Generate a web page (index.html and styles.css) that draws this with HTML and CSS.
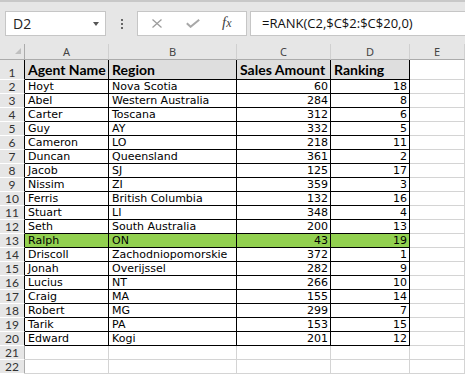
FILE: index.html
```html
<!DOCTYPE html>
<html lang="en">
<head>
  <meta charset="UTF-8" />
  <title>Sales Ranking</title>
  <link rel="stylesheet" href="styles.css">
</head>
<body>
  <div class="toolbar">
    <div class="namebox">
      <span>D2</span>
      <span class="arrow"></span>
    </div>
    <div class="dots"><i></i><i></i><i></i></div>
    <div class="fbuttons">
      <svg class="cancel" width="10" height="9" viewBox="0 0 10 9">
        <path d="M0.5 0.5 L9.5 8.5 M9.5 0.5 L0.5 8.5" stroke="#9c9c9c" stroke-width="1.3" fill="none" />
      </svg>
      <svg class="enter" width="14" height="9" viewBox="0 0 14 9">
        <path d="M0.8 4.2 L4.6 7.8 L13.2 0.8" stroke="#a8a8a8" stroke-width="2" fill="none" />
      </svg>
      <span class="fx"><i>f</i><i class="x">x</i></span>
    </div>
    <div class="formula">=RANK(C2,$C$2:$C$20,0)</div>
  </div>

  <table class="sheet">
    <colgroup>
      <col class="c-head">
      <col class="c-a">
      <col class="c-b">
      <col class="c-c">
      <col class="c-d">
      <col class="c-e">
    </colgroup>
    <tr class="cols">
      <th class="corner"><span class="tri"></span></th>
      <th>A</th><th>B</th><th>C</th><th>D</th><th>E</th>
    </tr>
    <tr class="title">
      <th class="edge">1</th>
      <td class="d">Agent Name</td><td class="d">Region</td><td class="d">Sales Amount</td><td class="d">Ranking</td><td></td>
    </tr>
    <tr><th class="edge">2</th><td class="d">Hoyt</td><td class="d">Nova Scotia</td><td class="d n">60</td><td class="d n">18</td><td></td></tr>
    <tr><th class="edge">3</th><td class="d">Abel</td><td class="d">Western Australia</td><td class="d n">284</td><td class="d n">8</td><td></td></tr>
    <tr><th class="edge">4</th><td class="d">Carter</td><td class="d">Toscana</td><td class="d n">312</td><td class="d n">6</td><td></td></tr>
    <tr><th class="edge">5</th><td class="d">Guy</td><td class="d">AY</td><td class="d n">332</td><td class="d n">5</td><td></td></tr>
    <tr><th class="edge">6</th><td class="d">Cameron</td><td class="d">LO</td><td class="d n">218</td><td class="d n">11</td><td></td></tr>
    <tr><th class="edge">7</th><td class="d">Duncan</td><td class="d">Queensland</td><td class="d n">361</td><td class="d n">2</td><td></td></tr>
    <tr><th class="edge">8</th><td class="d">Jacob</td><td class="d">SJ</td><td class="d n">125</td><td class="d n">17</td><td></td></tr>
    <tr><th class="edge">9</th><td class="d">Nissim</td><td class="d">ZI</td><td class="d n">359</td><td class="d n">3</td><td></td></tr>
    <tr><th class="edge">10</th><td class="d">Ferris</td><td class="d">British Columbia</td><td class="d n">132</td><td class="d n">16</td><td></td></tr>
    <tr><th class="edge">11</th><td class="d">Stuart</td><td class="d">LI</td><td class="d n">348</td><td class="d n">4</td><td></td></tr>
    <tr><th class="edge">12</th><td class="d">Seth</td><td class="d">South Australia</td><td class="d n">200</td><td class="d n">13</td><td></td></tr>
    <tr class="low"><th class="edge">13</th><td class="d">Ralph</td><td class="d">ON</td><td class="d n">43</td><td class="d n">19</td><td></td></tr>
    <tr><th class="edge">14</th><td class="d">Driscoll</td><td class="d">Zachodniopomorskie</td><td class="d n">372</td><td class="d n">1</td><td></td></tr>
    <tr><th class="edge">15</th><td class="d">Jonah</td><td class="d">Overijssel</td><td class="d n">282</td><td class="d n">9</td><td></td></tr>
    <tr><th class="edge">16</th><td class="d">Lucius</td><td class="d">NT</td><td class="d n">266</td><td class="d n">10</td><td></td></tr>
    <tr><th class="edge">17</th><td class="d">Craig</td><td class="d">MA</td><td class="d n">155</td><td class="d n">14</td><td></td></tr>
    <tr><th class="edge">18</th><td class="d">Robert</td><td class="d">MG</td><td class="d n">299</td><td class="d n">7</td><td></td></tr>
    <tr><th class="edge">19</th><td class="d">Tarik</td><td class="d">PA</td><td class="d n">153</td><td class="d n">15</td><td></td></tr>
    <tr><th class="edge">20</th><td class="d">Edward</td><td class="d">Kogi</td><td class="d n">201</td><td class="d n">12</td><td></td></tr>
    <tr><th>21</th><td></td><td></td><td></td><td></td><td></td></tr>
    <tr><th>22</th><td></td><td></td><td></td><td></td><td></td></tr>
  </table>
</body>
</html>
```

FILE: styles.css
```css
body {
  margin: 0;
  background: #fff;
  overflow: hidden;
  font-family: "DejaVu Sans", sans-serif;
}

/* formula bar */
.toolbar {
  height: 44px;
  box-sizing: border-box;
  background: #e6e6e6;
  border-top: 2px solid #c8c8c8;
  padding-top: 9px;
  display: flex;
  align-items: flex-start;
}
.namebox {
  margin-left: 5px;
  width: 101px;
  height: 25px;
  box-sizing: border-box;
  background: #fff;
  border: 1px solid #c6c6c6;
  display: flex;
  align-items: center;
  justify-content: space-between;
  padding: 0 6px 0 7px;
  font-family: "Open Sans", sans-serif;
  font-size: 14px;
  color: #222;
}
.arrow {
  width: 0;
  height: 0;
  border-left: 3.5px solid transparent;
  border-right: 3.5px solid transparent;
  border-top: 4px solid #555;
}
.dots {
  width: 31px;
  height: 25px;
  display: flex;
  flex-direction: column;
  align-items: center;
  justify-content: center;
  gap: 2px;
}
.dots i {
  width: 2px;
  height: 2px;
  background: #666;
}
.fbuttons {
  width: 110px;
  height: 25px;
  box-sizing: border-box;
  background: #fff;
  border: 1px solid #c6c6c6;
  display: flex;
  align-items: center;
  padding-left: 14px;
}
.enter { margin-left: 24px; }
.fx {
  margin-left: 22px;
  font-family: "Liberation Serif", serif;
  font-size: 15px;
  color: #444;
  margin-top: -2px;
}
.fx .x { font-size: 12px; }
.formula {
  flex: 1;
  margin-left: 3px;
  height: 25px;
  box-sizing: border-box;
  background: #fff;
  border: 1px solid #c6c6c6;
  border-right: none;
  padding-left: 11px;
  font-family: "Open Sans", sans-serif;
  font-size: 13px;
  line-height: 23px;
  color: #111;
  white-space: nowrap;
}

/* grid */
.sheet {
  table-layout: fixed;
  width: 465px;
  border-collapse: separate;
  border-spacing: 0;
  font-size: 11px;
}
.c-head { width: 25px; }
.c-a { width: 84px; }
.c-b { width: 128px; }
.c-c { width: 94px; }
.c-d { width: 79px; }
.c-e { width: 55px; }

tr { height: 14px; }
tr.cols { height: 16px; }
tr.title { height: 20px; }

th, td {
  padding: 0;
  border-right: 1px solid #d4d4d4;
  border-bottom: 1px solid #d4d4d4;
  white-space: nowrap;
  overflow: hidden;
  line-height: 13px;
}
th {
  background: #e6e6e6;
  font-family: "Lato", sans-serif;
  font-weight: normal;
  font-size: 12px;
  color: #333;
  border-bottom-color: #fff;
  border-right-color: #ababab;
  vertical-align: bottom;
}
.cols th {
  font-family: "Noto Sans", sans-serif;
  font-size: 11px;
  color: #444;
  border-right-color: #d0d0d0;
  border-bottom-color: #ababab;
  vertical-align: middle;
}
.cols th.corner {
  border-right-color: #ababab;
  text-align: right;
  vertical-align: bottom;
}
.tri {
  display: inline-block;
  width: 0;
  height: 0;
  margin: 0 3px 3px 0;
  border-left: 6px solid transparent;
  border-bottom: 6px solid #bfbfbf;
}
th.edge { border-right-color: #000; }
td {
  padding: 0 3px;
  vertical-align: bottom;
  color: #000;
}
td.d {
  border-right-color: #000;
  border-bottom-color: #000;
}
td.n { text-align: right; padding-right: 2px; }

.title td.d {
  background: #dedede;
  font-family: "Lato", sans-serif;
  font-weight: bold;
  font-size: 14px;
  line-height: 18px;
}
.low td.d { background: #92d050; }
```
